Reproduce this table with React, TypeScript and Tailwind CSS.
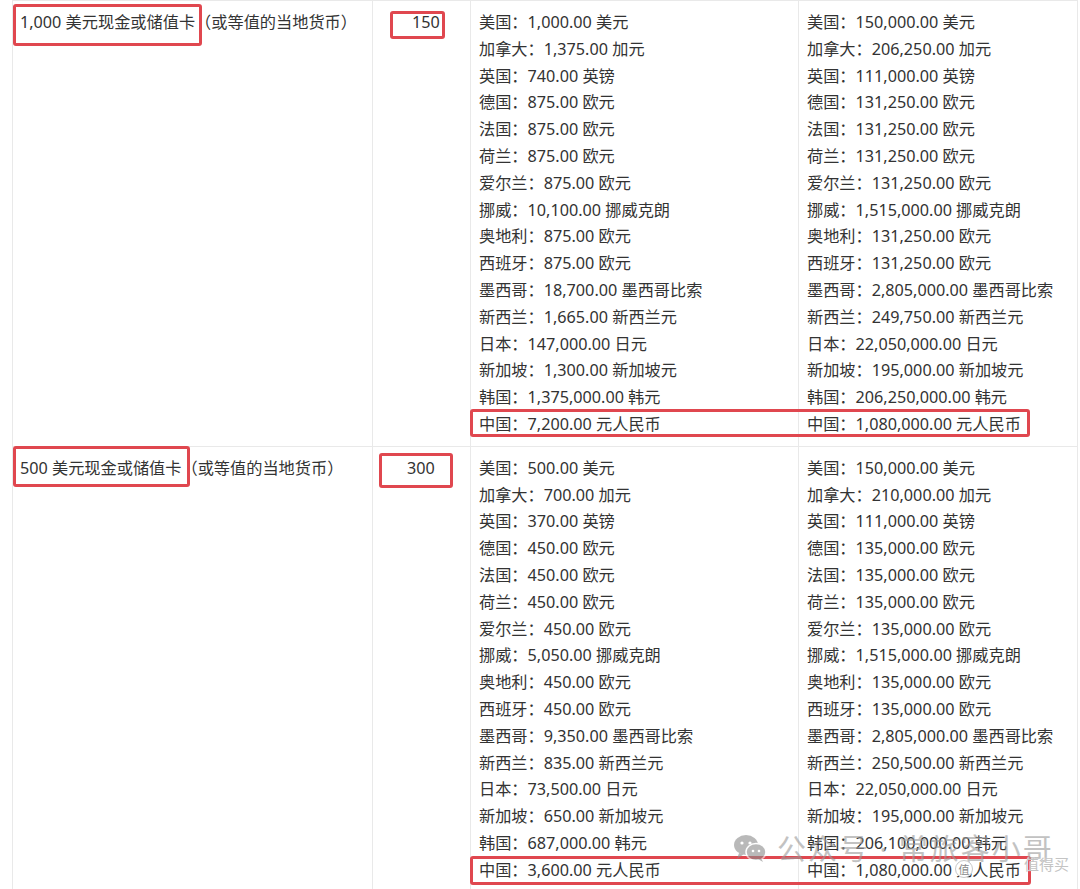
import React from "react";

interface Block {
  amount: string;
  fee: string;
  feePad: string;
  left: string[];
  right: string[];
  boxes: { label: string; fee: string; china: string };
}

const rows: Block[] = [
  {
    amount: "1,000 美元现金或储值卡",
    fee: "150",
    feePad: "pl-[39px]",
    left: [
      "美国：1,000.00 美元",
      "加拿大：1,375.00 加元",
      "英国：740.00 英镑",
      "德国：875.00 欧元",
      "法国：875.00 欧元",
      "荷兰：875.00 欧元",
      "爱尔兰：875.00 欧元",
      "挪威：10,100.00 挪威克朗",
      "奥地利：875.00 欧元",
      "西班牙：875.00 欧元",
      "墨西哥：18,700.00 墨西哥比索",
      "新西兰：1,665.00 新西兰元",
      "日本：147,000.00 日元",
      "新加坡：1,300.00 新加坡元",
      "韩国：1,375,000.00 韩元",
      "中国：7,200.00 元人民币",
    ],
    right: [
      "美国：150,000.00 美元",
      "加拿大：206,250.00 加元",
      "英国：111,000.00 英镑",
      "德国：131,250.00 欧元",
      "法国：131,250.00 欧元",
      "荷兰：131,250.00 欧元",
      "爱尔兰：131,250.00 欧元",
      "挪威：1,515,000.00 挪威克朗",
      "奥地利：131,250.00 欧元",
      "西班牙：131,250.00 欧元",
      "墨西哥：2,805,000.00 墨西哥比索",
      "新西兰：249,750.00 新西兰元",
      "日本：22,050,000.00 日元",
      "新加坡：195,000.00 新加坡元",
      "韩国：206,250,000.00 韩元",
      "中国：1,080,000.00 元人民币",
    ],
    boxes: {
      label: "top-[3px] left-0 w-[189px] h-[42px]",
      fee: "top-[10px] left-[377px] w-[55px] h-[28px]",
      china: "top-[408px] left-[457px] w-[560px] h-[28px]",
    },
  },
  {
    amount: "500 美元现金或储值卡",
    fee: "300",
    feePad: "pl-[34px]",
    left: [
      "美国：500.00 美元",
      "加拿大：700.00 加元",
      "英国：370.00 英镑",
      "德国：450.00 欧元",
      "法国：450.00 欧元",
      "荷兰：450.00 欧元",
      "爱尔兰：450.00 欧元",
      "挪威：5,050.00 挪威克朗",
      "奥地利：450.00 欧元",
      "西班牙：450.00 欧元",
      "墨西哥：9,350.00 墨西哥比索",
      "新西兰：835.00 新西兰元",
      "日本：73,500.00 日元",
      "新加坡：650.00 新加坡元",
      "韩国：687,000.00 韩元",
      "中国：3,600.00 元人民币",
    ],
    right: [
      "美国：150,000.00 美元",
      "加拿大：210,000.00 加元",
      "英国：111,000.00 英镑",
      "德国：135,000.00 欧元",
      "法国：135,000.00 欧元",
      "荷兰：135,000.00 欧元",
      "爱尔兰：135,000.00 欧元",
      "挪威：1,515,000.00 挪威克朗",
      "奥地利：135,000.00 欧元",
      "西班牙：135,000.00 欧元",
      "墨西哥：2,805,000.00 墨西哥比索",
      "新西兰：250,500.00 新西兰元",
      "日本：22,050,000.00 日元",
      "新加坡：195,000.00 新加坡元",
      "韩国：206,100,000.00 韩元",
      "中国：1,080,000.00 元人民币",
    ],
    boxes: {
      label: "-top-px left-0 w-[177px] h-[41px]",
      fee: "top-[6px] left-[366px] w-[74px] h-[35px]",
      china: "top-[409px] left-[457px] w-[561px] h-[29px]",
    },
  },
];

const RedBox = ({ pos }: { pos: string }) => (
  <div
    className={`absolute ${pos} border-[3px] border-[#e0474f] rounded-[3px] pointer-events-none`}
  ></div>
);

const Row = ({ row }: { row: Block }) => (
  <div className="relative grid grid-cols-[360px_98px_328px_280px] border-b border-[#e9e9e9]">
    {/* amount */}
    <div className="border-r border-[#e9e9e9] pl-[7px] pt-[8px]">
      {row.amount}
      <span>（或等值的当地货币）</span>
    </div>
    {/* fee */}
    <div className={`border-r border-[#e9e9e9] pt-[8px] ${row.feePad}`}>
      {row.fee}
    </div>
    {/* lists */}
    <div className="border-r border-[#e9e9e9] pl-[8px] py-[8px]">
      {row.left.map((l) => (
        <div key={l}>{l}</div>
      ))}
    </div>
    <div className="pl-[8px] py-[8px]">
      {row.right.map((l) => (
        <div key={l}>{l}</div>
      ))}
    </div>
    <RedBox pos={row.boxes.label} />
    <RedBox pos={row.boxes.fee} />
    <RedBox pos={row.boxes.china} />
  </div>
);

const Watermark = () => (
  <div className="absolute left-[733px] top-[833px] flex items-center pointer-events-none opacity-60">
    <svg width="34" height="30" viewBox="0 0 34 30" className="mr-[10px]">
      <ellipse cx="13" cy="12" rx="12" ry="10" fill="#8c8c8c" />
      <path d="M6 20 L4 26 L11 21 Z" fill="#8c8c8c" />
      <circle cx="9" cy="10" r="1.6" fill="#fff" />
      <circle cx="17" cy="10" r="1.6" fill="#fff" />
      <ellipse cx="23" cy="19" rx="10" ry="8.5" fill="#8c8c8c" stroke="#fff" strokeWidth="1.5" />
      <path d="M28 25 L30 29 L25 26 Z" fill="#8c8c8c" />
      <circle cx="20" cy="18" r="1.3" fill="#fff" />
      <circle cx="26" cy="18" r="1.3" fill="#fff" />
    </svg>
    <span className="text-[29px] leading-none tracking-[2px] text-[#9a9a9a]">
      公众号 · 常旅客小哥
    </span>
  </div>
);

const Smzdm = () => (
  <>
    <div className="absolute left-[955px] top-[860px] w-[18px] h-[18px] rounded-full bg-white border border-[#c8c8c8] flex items-center justify-center text-[11px] text-[#888] leading-none pointer-events-none">
      值
    </div>
    <span className="absolute left-[1024px] top-[857px] text-[15px] leading-none text-[#c4c4c4] [text-shadow:0_0_1px_#fff] pointer-events-none">
      值得买
    </span>
  </>
);

export default function App() {
  return (
    <div
      className="relative w-[1080px] h-[889px] overflow-hidden bg-white text-[16.2px] leading-[26.8px] text-[#333]"
      style={{ fontFamily: '"Noto Sans", "Noto Sans CJK SC", sans-serif' }}
    >
      <div className="ml-[12px] w-[1066px] border-l border-r border-t border-[#e9e9e9]">
        {rows.map((r) => (
          <Row key={r.fee} row={r} />
        ))}
      </div>
      <Watermark />
      <Smzdm />
    </div>
  );
}
